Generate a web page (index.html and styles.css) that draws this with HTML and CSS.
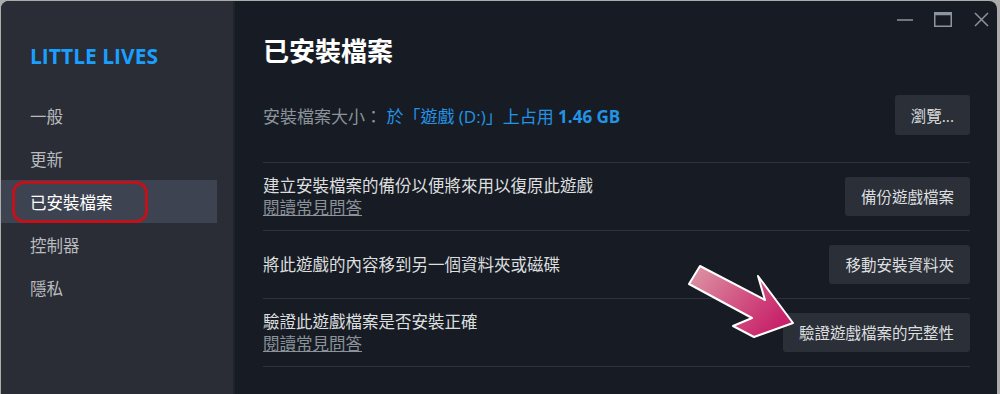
FILE: index.html
```html
<!DOCTYPE html>
<html lang="zh-Hant">
<head>
<meta charset="utf-8">
<title>LITTLE LIVES - 已安裝檔案</title>
<link rel="stylesheet" href="styles.css">
</head>
<body>
<div class="window">
  <aside class="sidebar">
    <div class="game-title">LITTLE LIVES</div>
    <nav class="nav">
      <div class="nav-item">一般</div>
      <div class="nav-item">更新</div>
      <div class="nav-item active">已安裝檔案<span class="highlight"></span></div>
      <div class="nav-item">控制器</div>
      <div class="nav-item">隱私</div>
    </nav>
  </aside>
  <main class="content">
    <div class="titlebar">
      <svg class="ctl ctl-min" width="16" height="16" viewBox="0 0 16 16"><line x1="0" y1="9" x2="16" y2="9"/></svg>
      <svg class="ctl ctl-max" width="18" height="15" viewBox="0 0 18 15"><rect x="0.75" y="0.75" width="16.5" height="13.5"/><line x1="0.75" y1="2" x2="17.25" y2="2" class="thick"/></svg>
      <svg class="ctl ctl-close" width="15" height="15" viewBox="0 0 15 15"><line x1="1" y1="1" x2="14" y2="14"/><line x1="14" y1="1" x2="1" y2="14"/></svg>
    </div>
    <h1 class="page-title">已安裝檔案</h1>
    <div class="size-row">
      <div class="size-text"><span class="label">安裝檔案大小： </span><span class="value">於「遊戲 (D:)」上占用 <b>1.46 GB</b></span></div>
      <button class="btn">瀏覽...</button>
    </div>
    <div class="rows">
      <div class="row">
        <div class="row-text">
          <div class="row-title">建立安裝檔案的備份以便將來用以復原此遊戲</div>
          <a class="faq">閱讀常見問答</a>
        </div>
        <button class="btn">備份遊戲檔案</button>
      </div>
      <div class="row">
        <div class="row-text">
          <div class="row-title">將此遊戲的內容移到另一個資料夾或磁碟</div>
        </div>
        <button class="btn">移動安裝資料夾</button>
      </div>
      <div class="row">
        <div class="row-text">
          <div class="row-title">驗證此遊戲檔案是否安裝正確</div>
          <a class="faq">閱讀常見問答</a>
        </div>
        <button class="btn">驗證遊戲檔案的完整性</button>
      </div>
    </div>
    <svg class="arrow" width="112" height="80" viewBox="0 0 112 80">
      <defs>
        <linearGradient id="ag" x1="0" y1="0" x2="1" y2="0.6">
          <stop offset="0" stop-color="#dc9aa8"/>
          <stop offset="0.55" stop-color="#d25684"/>
          <stop offset="1" stop-color="#c8226a"/>
        </linearGradient>
      </defs>
      <polygon points="14,4 79,38 72,14 107,61 68,75 47,64 66,56 3,22" fill="url(#ag)" stroke="#ffffff" stroke-width="2" stroke-linejoin="round"/>
    </svg>
  </main>
</div>
</body>
</html>
```
FILE: styles.css
```css
html, body {
  margin: 0;
  padding: 0;
}
body {
  width: 1000px;
  height: 394px;
  overflow: hidden;
  background: #acacac;
  font-family: "Open Sans", "Noto Sans CJK TC", sans-serif;
}
.window {
  margin: 1px 3px 0 1px;
  height: 393px;
  display: flex;
  border-radius: 8px 8px 0 0;
  overflow: hidden;
  background: #171c24;
}
.sidebar {
  width: 232px;
  flex: none;
  background: #2a2d35;
  border-right: 2px solid #1f232a;
  padding-top: 41px;
}
.game-title {
  padding-left: 29px;
  font-family: "Open Sans", sans-serif;
  font-weight: 700;
  font-size: 21px;
  line-height: 28px;
  color: #1a9fff;
  margin-bottom: 24px;
}
.nav {
  width: 216px;
}
.nav-item {
  position: relative;
  height: 43px;
  display: flex;
  align-items: center;
  padding-left: 29px;
  font-size: 16.5px;
  color: #b8bcbf;
}
.nav-item.active {
  background: #3d4350;
  color: #ffffff;
}
.highlight {
  position: absolute;
  left: 11px;
  top: 1px;
  width: 136px;
  height: 42px;
  box-sizing: border-box;
  border: 3px solid #c0121b;
  border-radius: 12px;
}
.content {
  flex: 1;
  position: relative;
  display: flex;
  flex-direction: column;
  padding: 0 27px 0 28px;
}
.titlebar {
  height: 36px;
  display: flex;
  justify-content: flex-end;
  align-items: center;
  margin-right: -19px;
}
.ctl {
  stroke: #8e959c;
  stroke-width: 1.5;
  fill: none;
}
.ctl .thick {
  stroke-width: 2.5;
}
.ctl-min {
  margin-right: 21px;
}
.ctl-max {
  margin-right: 22px;
}
.page-title {
  margin: 0;
  font-size: 26px;
  line-height: 28px;
  font-weight: 700;
  color: #ffffff;
}
.size-row {
  margin-top: 30px;
  margin-bottom: 27px;
  display: flex;
  align-items: center;
  justify-content: space-between;
}
.size-text {
  font-size: 17px;
}
.size-text .label {
  color: #8b929a;
}
.size-text .value {
  color: #2393e6;
}
.size-text b {
  font-weight: 700;
}
.btn {
  height: 40px;
  padding: 0 16px;
  border: none;
  border-radius: 3px;
  background: #2a2f38;
  color: #dcdedf;
  font-family: inherit;
  font-size: 15.5px;
}
.rows {
  border-bottom: 1px solid #2d323b;
}
.row {
  display: flex;
  align-items: center;
  justify-content: space-between;
  min-height: 68px;
  box-sizing: border-box;
  border-top: 1px solid #2d323b;
}
.row .btn {
  height: 39px;
}
.row-title {
  font-size: 16.5px;
  line-height: 22px;
  color: #dcdedf;
}
.faq {
  display: block;
  font-size: 16.5px;
  line-height: 22px;
  color: #8b929a;
  text-decoration: underline;
}
.arrow {
  position: absolute;
  left: 451px;
  top: 261px;
  overflow: visible;
}
```
